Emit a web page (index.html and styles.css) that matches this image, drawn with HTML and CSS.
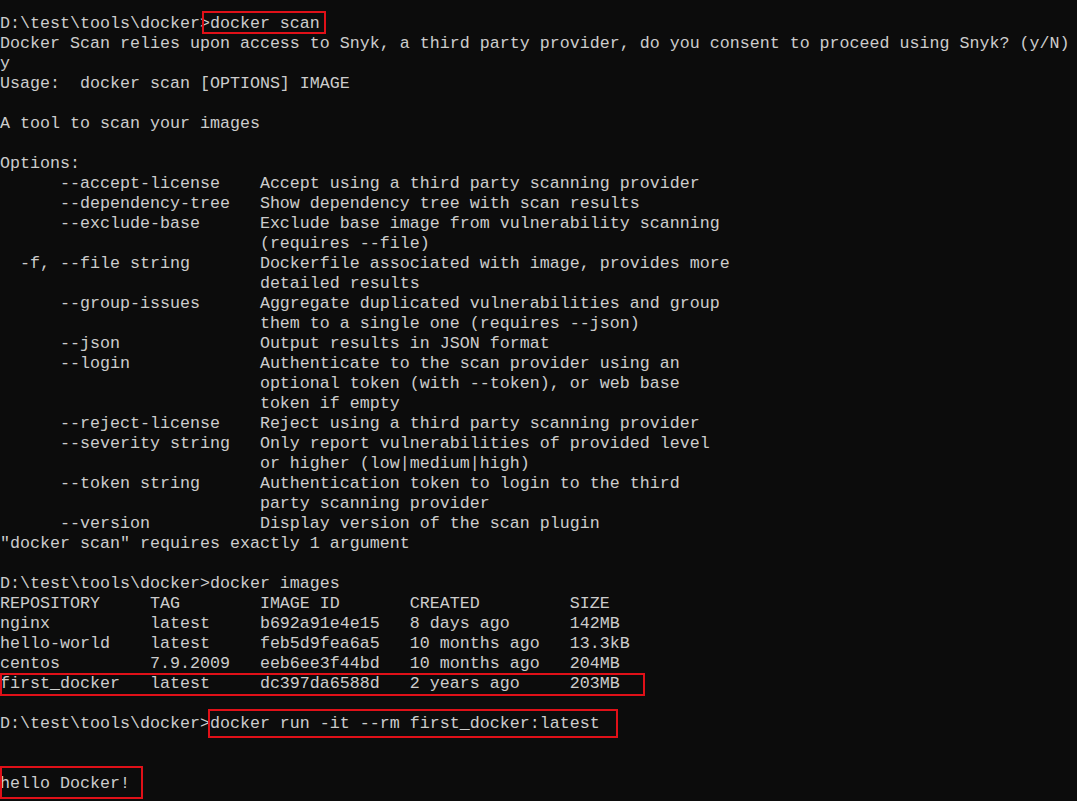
FILE: index.html
```html
<!DOCTYPE html>
<html>
<head>
<meta charset="utf-8">
<link rel="stylesheet" href="styles.css">
</head>
<body>
<div class="console">
<pre class="out">D:\test\tools\docker&gt;docker scan
Docker Scan relies upon access to Snyk, a third party provider, do you consent to proceed using Snyk? (y/N)
y
Usage:  docker scan [OPTIONS] IMAGE

A tool to scan your images

Options:
      --accept-license    Accept using a third party scanning provider
      --dependency-tree   Show dependency tree with scan results
      --exclude-base      Exclude base image from vulnerability scanning
                          (requires --file)
  -f, --file string       Dockerfile associated with image, provides more
                          detailed results
      --group-issues      Aggregate duplicated vulnerabilities and group
                          them to a single one (requires --json)
      --json              Output results in JSON format
      --login             Authenticate to the scan provider using an
                          optional token (with --token), or web base
                          token if empty
      --reject-license    Reject using a third party scanning provider
      --severity string   Only report vulnerabilities of provided level
                          or higher (low|medium|high)
      --token string      Authentication token to login to the third
                          party scanning provider
      --version           Display version of the scan plugin
"docker scan" requires exactly 1 argument

D:\test\tools\docker&gt;docker images
REPOSITORY     TAG        IMAGE ID       CREATED         SIZE
nginx          latest     b692a91e4e15   8 days ago      142MB
hello-world    latest     feb5d9fea6a5   10 months ago   13.3kB
centos         7.9.2009   eeb6ee3f44bd   10 months ago   204MB
first_docker   latest     dc397da6588d   2 years ago     203MB

D:\test\tools\docker&gt;docker run -it --rm first_docker:latest


hello Docker!</pre>
<div class="mark mark-scan"></div>
<div class="mark mark-row"></div>
<div class="mark mark-run"></div>
<div class="mark mark-hello"></div>
</div>
</body>
</html>
```
FILE: styles.css
```css
html, body {
  margin: 0;
  padding: 0;
  background: #0c0c0c;
  overflow: hidden;
}
.console {
  position: relative;
  width: 1077px;
  height: 801px;
  background: #0c0c0c;
  padding-top: 14px;
  box-sizing: border-box;
}
.out {
  margin: 0;
  font-family: "Liberation Mono", "DejaVu Sans Mono", monospace;
  font-size: 16.6667px;
  line-height: 20px;
  color: #cccccc;
  white-space: pre;
}
.mark {
  position: absolute;
  border: 2px solid #e01018;
  box-sizing: border-box;
}
.mark-scan { left: 202px; top: 11px; width: 124px; height: 23px; }
.mark-row { left: 0; top: 673px; width: 645px; height: 23px; }
.mark-run { left: 208px; top: 709px; width: 410px; height: 29px; }
.mark-hello { left: 0; top: 766px; width: 143px; height: 33px; }
```
